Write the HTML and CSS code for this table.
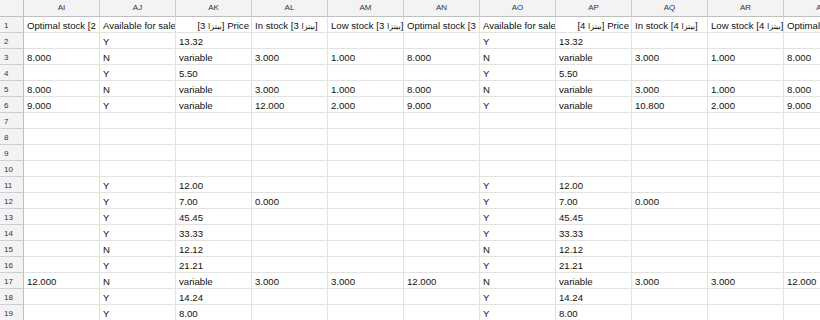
FILE: index.html
```html
<!DOCTYPE html>
<html>
<head>
<meta charset="utf-8">
<link rel="stylesheet" href="styles.css">
</head>
<body>
<div class="sheet">
  <div class="corner"></div>
  <div class="colhead">AI</div><div class="colhead">AJ</div><div class="colhead">AK</div><div class="colhead">AL</div><div class="colhead">AM</div><div class="colhead">AN</div><div class="colhead">AO</div><div class="colhead">AP</div><div class="colhead">AQ</div><div class="colhead">AR</div><div class="colhead">AS</div>

  <div class="rowhead">1</div>
  <div class="cell">Optimal stock [<span class="ar">بيتزا</span> 2]</div><div class="cell">Available for sale [<span class="ar">بيتزا</span> 3]</div><div class="cell rtl" dir="rtl">Price [<span class="ar">بيتزا</span> 3]</div><div class="cell">In stock [<span class="ar">بيتزا</span> 3]</div><div class="cell">Low stock [<span class="ar">بيتزا</span> 3]</div><div class="cell">Optimal stock [<span class="ar">بيتزا</span> 3]</div><div class="cell">Available for sale [<span class="ar">بيتزا</span> 4]</div><div class="cell rtl" dir="rtl">Price [<span class="ar">بيتزا</span> 4]</div><div class="cell">In stock [<span class="ar">بيتزا</span> 4]</div><div class="cell">Low stock [<span class="ar">بيتزا</span> 4]</div><div class="cell">Optimal stock [<span class="ar">بيتزا</span> 4]</div>

  <div class="rowhead">2</div>
  <div class="cell"></div><div class="cell">Y</div><div class="cell">13.32</div><div class="cell"></div><div class="cell"></div><div class="cell"></div><div class="cell">Y</div><div class="cell">13.32</div><div class="cell"></div><div class="cell"></div><div class="cell"></div>

  <div class="rowhead">3</div>
  <div class="cell">8.000</div><div class="cell">N</div><div class="cell">variable</div><div class="cell">3.000</div><div class="cell">1.000</div><div class="cell">8.000</div><div class="cell">N</div><div class="cell">variable</div><div class="cell">3.000</div><div class="cell">1.000</div><div class="cell">8.000</div>

  <div class="rowhead">4</div>
  <div class="cell"></div><div class="cell">Y</div><div class="cell">5.50</div><div class="cell"></div><div class="cell"></div><div class="cell"></div><div class="cell">Y</div><div class="cell">5.50</div><div class="cell"></div><div class="cell"></div><div class="cell"></div>

  <div class="rowhead">5</div>
  <div class="cell">8.000</div><div class="cell">N</div><div class="cell">variable</div><div class="cell">3.000</div><div class="cell">1.000</div><div class="cell">8.000</div><div class="cell">N</div><div class="cell">variable</div><div class="cell">3.000</div><div class="cell">1.000</div><div class="cell">8.000</div>

  <div class="rowhead">6</div>
  <div class="cell">9.000</div><div class="cell">Y</div><div class="cell">variable</div><div class="cell">12.000</div><div class="cell">2.000</div><div class="cell">9.000</div><div class="cell">Y</div><div class="cell">variable</div><div class="cell">10.800</div><div class="cell">2.000</div><div class="cell">9.000</div>

  <div class="rowhead">7</div>
  <div class="cell"></div><div class="cell"></div><div class="cell"></div><div class="cell"></div><div class="cell"></div><div class="cell"></div><div class="cell"></div><div class="cell"></div><div class="cell"></div><div class="cell"></div><div class="cell"></div>

  <div class="rowhead">8</div>
  <div class="cell"></div><div class="cell"></div><div class="cell"></div><div class="cell"></div><div class="cell"></div><div class="cell"></div><div class="cell"></div><div class="cell"></div><div class="cell"></div><div class="cell"></div><div class="cell"></div>

  <div class="rowhead">9</div>
  <div class="cell"></div><div class="cell"></div><div class="cell"></div><div class="cell"></div><div class="cell"></div><div class="cell"></div><div class="cell"></div><div class="cell"></div><div class="cell"></div><div class="cell"></div><div class="cell"></div>

  <div class="rowhead">10</div>
  <div class="cell"></div><div class="cell"></div><div class="cell"></div><div class="cell"></div><div class="cell"></div><div class="cell"></div><div class="cell"></div><div class="cell"></div><div class="cell"></div><div class="cell"></div><div class="cell"></div>

  <div class="rowhead">11</div>
  <div class="cell"></div><div class="cell">Y</div><div class="cell">12.00</div><div class="cell"></div><div class="cell"></div><div class="cell"></div><div class="cell">Y</div><div class="cell">12.00</div><div class="cell"></div><div class="cell"></div><div class="cell"></div>

  <div class="rowhead">12</div>
  <div class="cell"></div><div class="cell">Y</div><div class="cell">7.00</div><div class="cell">0.000</div><div class="cell"></div><div class="cell"></div><div class="cell">Y</div><div class="cell">7.00</div><div class="cell">0.000</div><div class="cell"></div><div class="cell"></div>

  <div class="rowhead">13</div>
  <div class="cell"></div><div class="cell">Y</div><div class="cell">45.45</div><div class="cell"></div><div class="cell"></div><div class="cell"></div><div class="cell">Y</div><div class="cell">45.45</div><div class="cell"></div><div class="cell"></div><div class="cell"></div>

  <div class="rowhead">14</div>
  <div class="cell"></div><div class="cell">Y</div><div class="cell">33.33</div><div class="cell"></div><div class="cell"></div><div class="cell"></div><div class="cell">Y</div><div class="cell">33.33</div><div class="cell"></div><div class="cell"></div><div class="cell"></div>

  <div class="rowhead">15</div>
  <div class="cell"></div><div class="cell">N</div><div class="cell">12.12</div><div class="cell"></div><div class="cell"></div><div class="cell"></div><div class="cell">N</div><div class="cell">12.12</div><div class="cell"></div><div class="cell"></div><div class="cell"></div>

  <div class="rowhead">16</div>
  <div class="cell"></div><div class="cell">Y</div><div class="cell">21.21</div><div class="cell"></div><div class="cell"></div><div class="cell"></div><div class="cell">Y</div><div class="cell">21.21</div><div class="cell"></div><div class="cell"></div><div class="cell"></div>

  <div class="rowhead">17</div>
  <div class="cell">12.000</div><div class="cell">N</div><div class="cell">variable</div><div class="cell">3.000</div><div class="cell">3.000</div><div class="cell">12.000</div><div class="cell">N</div><div class="cell">variable</div><div class="cell">3.000</div><div class="cell">3.000</div><div class="cell">12.000</div>

  <div class="rowhead">18</div>
  <div class="cell"></div><div class="cell">Y</div><div class="cell">14.24</div><div class="cell"></div><div class="cell"></div><div class="cell"></div><div class="cell">Y</div><div class="cell">14.24</div><div class="cell"></div><div class="cell"></div><div class="cell"></div>

  <div class="rowhead">19</div>
  <div class="cell"></div><div class="cell">Y</div><div class="cell">8.00</div><div class="cell"></div><div class="cell"></div><div class="cell"></div><div class="cell">Y</div><div class="cell">8.00</div><div class="cell"></div><div class="cell"></div><div class="cell"></div>
</div>
</body>
</html>
```
FILE: styles.css
```css
html, body {
  margin: 0;
  padding: 0;
  background: #ffffff;
  overflow: hidden;
}
.sheet {
  display: grid;
  grid-template-columns: 24px repeat(11, 76px);
  grid-template-rows: 17px;
  grid-auto-rows: 16px;
  width: 860px;
  font-family: "Liberation Sans", Arial, sans-serif;
}
.corner, .colhead, .rowhead, .cell {
  box-sizing: border-box;
  overflow: hidden;
  white-space: nowrap;
}
.corner {
  background: #f3f3f3;
  border-right: 1px solid #c0c0c0;
  border-bottom: 1px solid #c0c0c0;
}
.colhead {
  background: #f3f3f3;
  border-right: 1px solid #cfcfcf;
  border-bottom: 1px solid #c0c0c0;
  color: #333;
  font-size: 8px;
  line-height: 15px;
  text-align: center;
}
.rowhead {
  background: #f3f3f3;
  border-right: 1px solid #c0c0c0;
  border-bottom: 1px solid #cfcfcf;
  color: #333;
  font-size: 8px;
  line-height: 15px;
  padding: 1px 0 0 4px;
}
.cell {
  border-right: 1px solid #e2e2e2;
  border-bottom: 1px solid #e2e2e2;
  color: #111;
  font-size: 9.6px;
  line-height: 15px;
  padding: 1px 2px 0 3px;
}
.cell.rtl {
  text-align: right;
  padding: 1px 2px 0 2px;
}
.ar {
  font-family: "DejaVu Sans", sans-serif;
  font-size: 8px;
}
```
